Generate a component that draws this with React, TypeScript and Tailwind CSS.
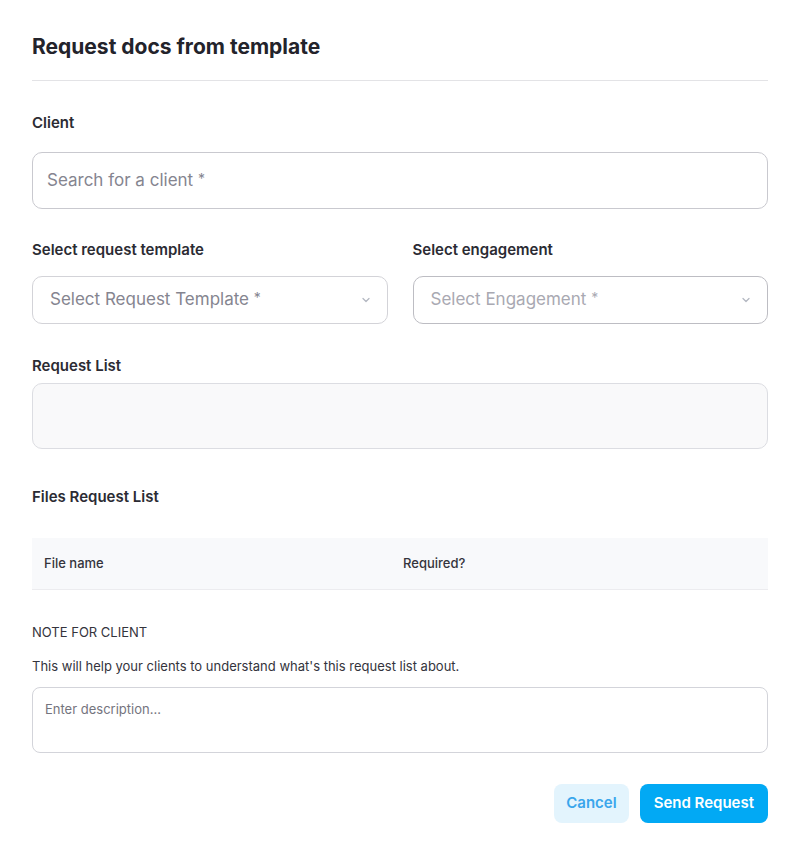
import React from "react";

function Chevron() {
  return (
    <svg width="12" height="12" viewBox="0 0 12 12" fill="none" className="shrink-0">
      <path d="M3 4.5 L6 7.5 L9 4.5" stroke="#b4b8c2" strokeWidth="1.3" strokeLinecap="round" strokeLinejoin="round" />
    </svg>
  );
}

export default function App() {
  return (
    <div className="min-h-[855px] bg-white px-8 pt-[34px] text-[#2b2b33]" style={{ fontFamily: "Inter, 'Noto Sans', sans-serif" }}>
      <h1 className="text-[21px] font-bold leading-[26px] text-[#23232b]">Request docs from template</h1>
      <div className="mt-[20px] h-px bg-[#e3e3e6]" />

      <div className="mt-[32px] text-[15px] font-semibold leading-[20px]">Client</div>
      <div className="mt-[19px] flex h-[57px] items-center rounded-[10px] border border-[#c9c9cf] px-[14px]">
        <span className="text-[17px] text-[#858590]">Search for a client <span className="align-top text-[14px]">*</span></span>
      </div>

      <div className="mt-[31px] grid grid-cols-2 gap-[25px]">
        <div>
          <div className="text-[15px] font-semibold leading-[20px]">Select request template</div>
          <div className="mt-[16px] flex h-[48px] items-center justify-between rounded-[10px] border border-[#d3d3d8] pl-[17px] pr-[15px]">
            <span className="text-[17px] text-[#858590]">Select Request Template <span className="align-top text-[14px]">*</span></span>
            <Chevron />
          </div>
        </div>
        <div>
          <div className="text-[15px] font-semibold leading-[20px]">Select engagement</div>
          <div className="mt-[16px] flex h-[48px] items-center justify-between rounded-[10px] border border-[#bdbdc3] pl-[17px] pr-[15px]">
            <span className="text-[17px] text-[#a9a9b2]">Select Engagement <span className="align-top text-[14px]">*</span></span>
            <Chevron />
          </div>
        </div>
      </div>

      <div className="mt-[32px] text-[15px] font-semibold leading-[20px]">Request List</div>
      <div className="mt-[7px] h-[66px] rounded-[10px] border border-[#dcdde2] bg-[#f9f9fa]" />

      <div className="mt-[38px] text-[15px] font-semibold leading-[20px]">Files Request List</div>
      <div className="mt-[31px] grid h-[52px] grid-cols-2 items-center border-b border-[#ececef] bg-[#f8f9fb] px-3 text-[13px] font-medium text-[#34343c]">
        <span>File name</span>
        <span className="pl-[3px]">Required?</span>
      </div>

      <div className="mt-[33px] text-[13px] leading-[18px] text-[#34343c]">NOTE FOR CLIENT</div>
      <div className="mt-[16px] text-[13px] leading-[18px] text-[#34343c]">This will help your clients to understand what's this request list about.</div>
      <div className="mt-[12px] h-[66px] rounded-[8px] border border-[#d3d4da] px-3 pt-[12px] text-[13px] text-[#74747e]">Enter description...</div>

      <div className="mt-[31px] flex justify-end gap-[11px]">
        <button className="h-[39px] rounded-[8px] bg-[#e3f4fd] px-3 text-[15px] font-semibold text-[#3aa6ec]">Cancel</button>
        <button className="h-[39px] rounded-[8px] bg-[#02a9f4] px-[14px] text-[15px] font-semibold text-white">Send Request</button>
      </div>
    </div>
  );
}
